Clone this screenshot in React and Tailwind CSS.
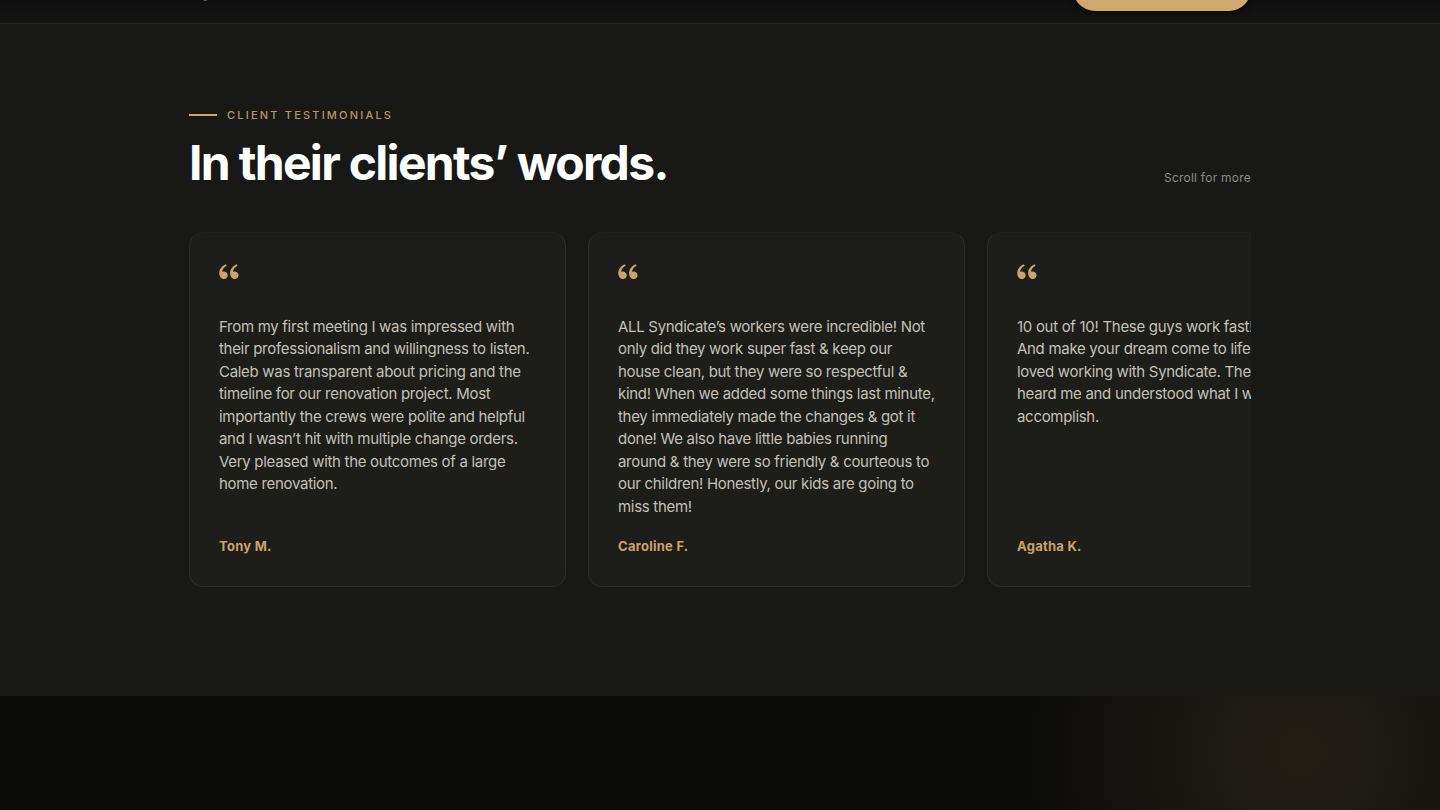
import { RiDoubleQuotesL } from 'react-icons/ri';
import { FiArrowRight } from 'react-icons/fi';

const testimonials = [
  {
    name: 'Tony M.',
    lines: [
      'From my first meeting I was impressed with',
      'their professionalism and willingness to listen.',
      'Caleb was transparent about pricing and the',
      'timeline for our renovation project. Most',
      'importantly the crews were polite and helpful',
      'and I wasn’t hit with multiple change orders.',
      'Very pleased with the outcomes of a large',
      'home renovation.',
    ],
  },
  {
    name: 'Caroline F.',
    lines: [
      'ALL Syndicate’s workers were incredible! Not',
      'only did they work super fast & keep our',
      'house clean, but they were so respectful &',
      'kind! When we added some things last minute,',
      'they immediately made the changes & got it',
      'done! We also have little babies running',
      'around & they were so friendly & courteous to',
      'our children! Honestly, our kids are going to',
      'miss them!',
    ],
  },
  {
    name: 'Agatha K.',
    lines: [
      '10 out of 10! These guys work fast!',
      'And make your dream come to life. I',
      'loved working with Syndicate. They',
      'heard me and understood what I wanted to',
      'accomplish.',
    ],
  },
];

const TestimonialCard = ({ name, lines }) => (
  <div className="flex h-[355px] w-[377px] shrink-0 flex-col rounded-[14px] border border-[#2d2c28] border-t-[#22211e] bg-[#1d1d1a] px-[29px] pt-[26px] pb-[29px]">
    <RiDoubleQuotesL className="h-[26px] w-[26px] -ml-[3px] text-[#c9a46b]" />
    <p className="mt-[31px] text-[15px] leading-[22.5px] tracking-[-0.02em] text-[#c3c1b9]">
      {lines.map((line, i) => (
        <span key={i} className="block whitespace-nowrap">{line}</span>
      ))}
    </p>
    <div className="mt-auto text-[13px] font-bold tracking-[0.02em] text-[#c9a46b]">{name}</div>
  </div>
);

const App = () => {
  return (
    <div className="min-h-screen bg-[#181817] font-['Inter',sans-serif]">
      {/* header, scrolled mostly out of view */}
      <header className="h-[24px] overflow-hidden border-b border-[#272727] bg-gradient-to-b from-[#0f0f0f] to-[#151515]">
        <div className="-mt-[46px] flex h-[70px] items-center justify-between px-[189px]">
          <span className="text-[20px] font-bold text-white">Syndicate</span>
          <button className="flex h-[44px] w-[178px] items-center justify-center gap-2 rounded-full bg-[#d0a96f] text-[14px] font-semibold text-[#1a1712] shadow-[0_2px_6px_rgba(0,0,0,0.5)]">
            Get a Quote
            <FiArrowRight className="h-4 w-4" />
          </button>
        </div>
      </header>

      <section className="h-[672px] pt-[83px]">
        <div className="mx-auto w-[1062px]">
          <div className="flex items-center gap-[10px]">
            <span className="h-[2px] w-[28px] bg-[#c9a46b]" />
            <span className="text-[11px] font-medium tracking-[0.2em] text-[#b7976a]">CLIENT TESTIMONIALS</span>
          </div>
          <div className="mt-[9px] flex items-end justify-between">
            <h2 className="text-[48px] font-bold leading-[60px] tracking-[-0.035em] text-white">
              In their clients’ words.
            </h2>
            <span className="mb-[6px] text-[12px] tracking-[0.02em] text-[#8c8a85]">Scroll for more</span>
          </div>

          <div className="mt-[39px] flex gap-[22px] overflow-hidden">
            {testimonials.map((t) => (
              <TestimonialCard key={t.name} {...t} />
            ))}
          </div>
        </div>
      </section>

      <footer className="h-[300px] bg-[#0b0b0a] bg-[radial-gradient(circle_at_1300px_56px,rgba(201,164,107,0.13),rgba(201,164,107,0.05)_180px,transparent_270px)]" />
    </div>
  );
};

export default App;
